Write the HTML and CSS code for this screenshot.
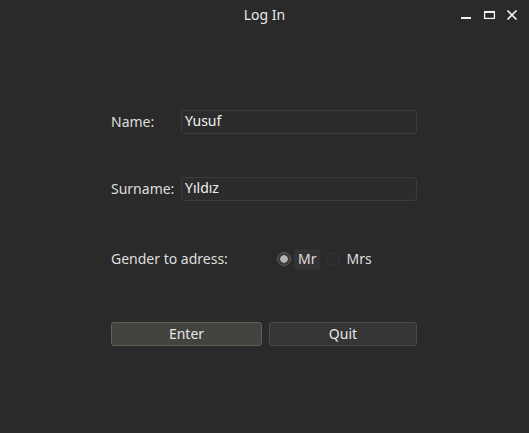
FILE: index.html
```html
<!DOCTYPE html>
<html>
<head>
<meta charset="utf-8">
<link rel="stylesheet" href="styles.css">
</head>
<body>
<div class="window">
  <div class="titlebar">
    <span class="title">Log In</span>
    <svg class="controls" width="60" height="14" viewBox="0 0 60 14">
      <rect x="1" y="8" width="10" height="2" fill="#f2f2f2"/>
      <rect x="24.6" y="2.6" width="9.8" height="6.8" fill="none" stroke="#f2f2f2" stroke-width="1.3"/>
      <rect x="24" y="2" width="11" height="2" fill="#f2f2f2"/>
      <path d="M47.5 1.5 L56.5 10.5 M56.5 1.5 L47.5 10.5" stroke="#f2f2f2" stroke-width="1.7"/>
    </svg>
  </div>
  <div class="form">
    <div class="row field">
      <label class="lbl">Name:</label>
      <div class="input">Yusuf</div>
    </div>
    <div class="row field second">
      <label class="lbl">Surname:</label>
      <div class="input">Yıldız</div>
    </div>
    <div class="row gender">
      <span class="glbl">Gender to adress:</span>
      <div class="radios">
        <span class="radio checked"></span>
        <span class="rtext focus">Mr</span>
        <span class="radio"></span>
        <span class="rtext">Mrs</span>
      </div>
    </div>
    <div class="row buttons">
      <button class="btn primary">Enter</button>
      <button class="btn">Quit</button>
    </div>
  </div>
</div>
</body>
</html>
```
FILE: styles.css
```css
* { box-sizing: border-box; }
html, body { margin: 0; padding: 0; background: #2a2a2a; }
body {
  font-family: "Noto Sans", "DejaVu Sans", sans-serif;
  font-size: 14px;
  color: #dedede;
}
.window { width: 529px; height: 433px; background: #2a2a2a; }
.titlebar {
  height: 30px;
  display: flex;
  align-items: center;
  justify-content: center;
  position: relative;
}
.title { font-size: 14px; color: #e8e8e8; margin-top: -2px; }
.controls {
  position: absolute;
  left: 460px;
  top: 9px;
}
.form {
  margin-left: 111px;
  width: 306px;
  padding-top: 80px;
  display: flex;
  flex-direction: column;
}
.field { display: flex; align-items: center; height: 24px; }
.field.second { margin-top: 43px; }
.lbl { width: 70px; flex: none; padding-bottom: 2px; }
.input {
  flex: 1;
  height: 24px;
  border: 1px solid #3c3c3c;
  border-radius: 3px;
  background: #2c2c2c;
  padding: 0 3px;
  line-height: 20px;
  color: #f0f0f0;
}
.gender { display: flex; align-items: center; margin-top: 47px; height: 22px; }
.glbl { width: 166px; flex: none; padding-bottom: 2px; }
.radios { display: flex; align-items: center; }
.radio {
  width: 14px; height: 14px;
  border-radius: 50%;
  border: 1px solid #363636;
  background: #2b2b2b;
  display: inline-block;
  flex: none;
}
.radio.checked {
  border-color: #5a5a5a;
  background: radial-gradient(circle, #b4b4b4 0 3.5px, #3a3a3a 4px);
}
.rtext { margin-left: 3px; margin-right: 6px; padding: 0 3px; height: 21px; line-height: 19px; border-radius: 2px; }
.rtext.focus { background: #343434; border: 1px solid #323232; line-height: 17px; }
.buttons { display: flex; gap: 7px; margin-top: 52px; }
.btn {
  font-family: inherit;
  font-size: 14px;
  color: #e6e6e6;
  height: 24px;
  border: 1px solid #4a4a4a;
  border-radius: 3px;
  background: #353535;
  padding: 0 0 2px 0;
  width: 148px;
}
.btn.primary { width: 151px; background: #42423e; border-color: #5f5f54; }
```
